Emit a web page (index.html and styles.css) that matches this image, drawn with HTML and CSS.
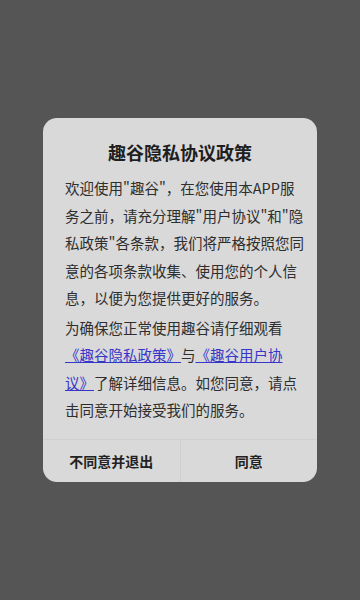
FILE: index.html
```html
<!DOCTYPE html>
<html lang="zh-CN">
<head>
<meta charset="utf-8">
<title>趣谷隐私协议政策</title>
<link rel="stylesheet" href="styles.css">
</head>
<body>
<div class="overlay">
  <div class="dialog">
    <h1 class="title">趣谷隐私协议政策</h1>
    <div class="content">
      <p class="para">欢迎使用"趣谷"，在您使用本APP服<br>务之前，请充分理解"用户协议"和"隐<br>私政策"各条款，我们将严格按照您同<br>意的各项条款收集、使用您的个人信<br>息，以便为您提供更好的服务。</p>
      <p class="para">为确保您正常使用趣谷请仔细观看<br><a class="link" href="#">《趣谷隐私政策》</a>与<a class="link" href="#">《趣谷用户协<br>议》</a>了解详细信息。如您同意，请点<br>击同意开始接受我们的服务。</p>
    </div>
    <div class="actions">
      <button class="btn">不同意并退出</button>
      <button class="btn btn-right">同意</button>
    </div>
  </div>
</div>
</body>
</html>
```

FILE: styles.css
```css
html, body {
  margin: 0;
  padding: 0;
}
body {
  background: #555555;
  font-family: "Noto Sans CJK SC", "Noto Sans", sans-serif;
}
.overlay {
  width: 360px;
  height: 600px;
  display: flex;
  align-items: center;
  justify-content: center;
}
.dialog {
  width: 274px;
  height: 364px;
  background: #d9d9d9;
  border-radius: 14px;
  display: flex;
  flex-direction: column;
  overflow: hidden;
}
.title {
  margin: 0;
  padding-top: 22px;
  font-size: 18px;
  line-height: 24px;
  font-weight: 700;
  color: #1e1e1e;
  text-align: center;
}
.content {
  padding: 10px 12px 0 22px;
  flex: 1;
}
.para {
  margin: 0 0 2px 0;
  font-size: 14.5px;
  line-height: 27.5px;
  color: #2e2e2e;
  white-space: nowrap;
}
.link {
  color: #3636c8;
  text-decoration: underline;
}
.actions {
  display: flex;
  height: 42px;
  border-top: 1px solid #cfcfcf;
}
.btn {
  flex: 1;
  border: 0;
  background: transparent;
  font-family: "Noto Sans CJK SC", "Noto Sans", sans-serif;
  font-size: 14px;
  font-weight: 700;
  color: #222222;
  padding: 0;
}
.btn-right {
  border-left: 1px solid #cfcfcf;
}
```
